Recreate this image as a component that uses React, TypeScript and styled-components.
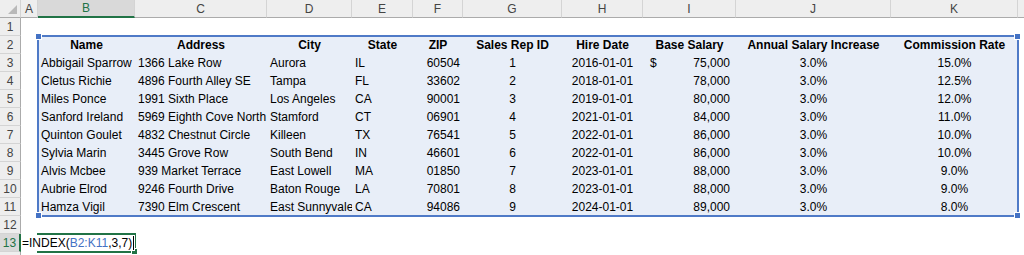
import styled, { createGlobalStyle, css } from "styled-components";

type Align = "left" | "center" | "right";

const COL_WIDTHS = [21, 17, 97, 132, 85, 61, 50, 99, 81, 93, 155, 127, 80];
const COL_LETTERS = ["A", "B", "C", "D", "E", "F", "G", "H", "I", "J", "K", ""];
const ROW_COUNT = 14;

const HEADERS = [
  "Name",
  "Address",
  "City",
  "State",
  "ZIP",
  "Sales Rep ID",
  "Hire Date",
  "Base Salary",
  "Annual Salary Increase",
  "Commission Rate",
];

const ALIGNS: Align[] = ["left", "left", "left", "left", "right", "center", "center", "right", "center", "center"];

const DATA = [
  ["Abbigail Sparrow", "1366 Lake Row", "Aurora", "IL", "60504", "1", "2016-01-01", "75,000", "3.0%", "15.0%"],
  ["Cletus Richie", "4896 Fourth Alley SE", "Tampa", "FL", "33602", "2", "2018-01-01", "78,000", "3.0%", "12.5%"],
  ["Miles Ponce", "1991 Sixth Place", "Los Angeles", "CA", "90001", "3", "2019-01-01", "80,000", "3.0%", "12.0%"],
  ["Sanford Ireland", "5969 Eighth Cove North", "Stamford", "CT", "06901", "4", "2021-01-01", "84,000", "3.0%", "11.0%"],
  ["Quinton Goulet", "4832 Chestnut Circle", "Killeen", "TX", "76541", "5", "2022-01-01", "86,000", "3.0%", "10.0%"],
  ["Sylvia Marin", "3445 Grove Row", "South Bend", "IN", "46601", "6", "2022-01-01", "86,000", "3.0%", "10.0%"],
  ["Alvis Mcbee", "939 Market Terrace", "East Lowell", "MA", "01850", "7", "2023-01-01", "88,000", "3.0%", "9.0%"],
  ["Aubrie Elrod", "9246 Fourth Drive", "Baton Rouge", "LA", "70801", "8", "2023-01-01", "88,000", "3.0%", "9.0%"],
  ["Hamza Vigil", "7390 Elm Crescent", "East Sunnyvale", "CA", "94086", "9", "2024-01-01", "89,000", "3.0%", "8.0%"],
];

// sheet row n sits on grid row n + 1, column B is grid column 3
const ACTIVE_ROW = 13;
const ACTIVE_COL = 3;

export default function App() {
  const rows = Array.from({ length: ROW_COUNT }, (_, i) => i + 1);

  return (
    <>
      <GlobalStyle />
      <Sheet>
        <Corner>
          <svg width="9" height="9" viewBox="0 0 9 9">
            <polygon points="9,0 9,9 0,9" fill="#b9b9b9" />
          </svg>
        </Corner>

        {COL_LETTERS.map((letter, i) => (
          <ColHeader key={i} $col={i + 2} $active={i + 2 === ACTIVE_COL}>
            {letter}
          </ColHeader>
        ))}

        {rows.map((r) => (
          <RowHeader key={r} $row={r + 1} $active={r === ACTIVE_ROW}>
            {r <= 13 ? r : ""}
          </RowHeader>
        ))}

        <RangeBox>
          <Handle $x="left" $y="top" />
          <Handle $x="right" $y="top" />
          <Handle $x="left" $y="bottom" />
          <Handle $x="right" $y="bottom" />
        </RangeBox>

        {HEADERS.map((h, i) => (
          <Cell key={h} $row={3} $col={i + 3} $align="center" $bold>
            {h}
          </Cell>
        ))}

        {DATA.map((record, r) =>
          record.map((value, c) =>
            c === 7 ? (
              <MoneyCell key={`${r}-${c}`} $row={r + 4} $col={c + 3} $align="right">
                <span>{r === 0 ? "$" : ""}</span>
                <span>{value}</span>
              </MoneyCell>
            ) : (
              <Cell key={`${r}-${c}`} $row={r + 4} $col={c + 3} $align={ALIGNS[c]}>
                {value}
              </Cell>
            )
          )
        )}

        <ActiveBox>
          <Handle $x="right" $y="bottom" $green />
        </ActiveBox>

        <Editor>
          =INDEX(<RefText>B2:K11</RefText>,3,7)
          <Caret />
        </Editor>
      </Sheet>
    </>
  );
}

const GlobalStyle = createGlobalStyle`
  html, body {
    margin: 0;
    padding: 0;
    background: #ffffff;
    overflow: hidden;
  }

  body {
    font-family: "Liberation Sans", Arial, sans-serif;
    font-size: 12px;
    color: #000000;
  }
`;

const Sheet = styled.div`
  display: grid;
  grid-template-columns: ${COL_WIDTHS.map((w) => `${w}px`).join(" ")};
  grid-template-rows: repeat(${ROW_COUNT + 1}, 18px);
  width: 1024px;
  height: 255px;
  overflow: hidden;
`;

const headerBase = css`
  box-sizing: border-box;
  display: flex;
  align-items: center;
  justify-content: center;
  background: #eeeeee;
  color: #444444;
  font-size: 12px;
`;

const Corner = styled.div`
  ${headerBase};
  grid-row: 1;
  grid-column: 1;
  align-items: flex-end;
  justify-content: flex-end;
  padding: 0 3px 3px 0;
  border-right: 1px solid #d4d4d4;
  border-bottom: 1px solid #ababab;
`;

const ColHeader = styled.div<{ $col: number; $active?: boolean }>`
  ${headerBase};
  grid-row: 1;
  grid-column: ${({ $col }) => $col};
  border-right: 1px solid #d4d4d4;
  border-bottom: ${({ $active }) => ($active ? "2px solid #217346" : "1px solid #ababab")};
  background: ${({ $active }) => ($active ? "#d9d9d9" : "#eeeeee")};
  color: ${({ $active }) => ($active ? "#217346" : "#444444")};
`;

const RowHeader = styled.div<{ $row: number; $active?: boolean }>`
  ${headerBase};
  grid-row: ${({ $row }) => $row};
  grid-column: 1;
  border-bottom: 1px solid #d4d4d4;
  border-right: ${({ $active }) => ($active ? "2px solid #217346" : "1px solid #ababab")};
  background: ${({ $active }) => ($active ? "#d9d9d9" : "#eeeeee")};
  color: ${({ $active }) => ($active ? "#217346" : "#444444")};
`;

const Cell = styled.div<{ $row: number; $col: number; $align: Align; $bold?: boolean }>`
  grid-row: ${({ $row }) => $row};
  grid-column: ${({ $col }) => $col};
  z-index: 1;
  display: flex;
  align-items: center;
  justify-content: ${({ $align }) =>
    $align === "left" ? "flex-start" : $align === "right" ? "flex-end" : "center"};
  padding: 0 3px;
  overflow: hidden;
  white-space: nowrap;
  font-weight: ${({ $bold }) => ($bold ? 700 : 400)};
  line-height: 18px;
`;

const MoneyCell = styled(Cell)`
  justify-content: space-between;
  padding: 0 6px 0 7px;
`;

const RangeBox = styled.div`
  grid-row: 3 / 13;
  grid-column: 3 / 13;
  position: relative;
  z-index: 0;
  margin: -1px;
  border: 2px solid #4f7ac7;
  background: #e8eef8;
`;

const Handle = styled.span<{ $x: "left" | "right"; $y: "top" | "bottom"; $green?: boolean }>`
  position: absolute;
  ${({ $x }) => $x}: -4px;
  ${({ $y }) => $y}: -4px;
  width: 5px;
  height: 5px;
  background: ${({ $green }) => ($green ? "#217346" : "#4472c4")};
  border: 1px solid #ffffff;
`;

const ActiveBox = styled.div`
  grid-row: ${ACTIVE_ROW + 1};
  grid-column: ${ACTIVE_COL};
  position: relative;
  z-index: 1;
  margin: -1px;
  border: 2px solid #217346;
`;

const Editor = styled.div`
  grid-row: ${ACTIVE_ROW + 1};
  grid-column: 2 / 4;
  z-index: 2;
  display: flex;
  align-items: center;
  padding-left: 1px;
  margin: 1px 0;
  background: #ffffff;
  white-space: nowrap;
  line-height: 16px;
`;

const RefText = styled.span`
  color: #4472c4;
`;

const Caret = styled.span`
  width: 1px;
  height: 14px;
  margin-left: 1px;
  background: #000000;
`;
